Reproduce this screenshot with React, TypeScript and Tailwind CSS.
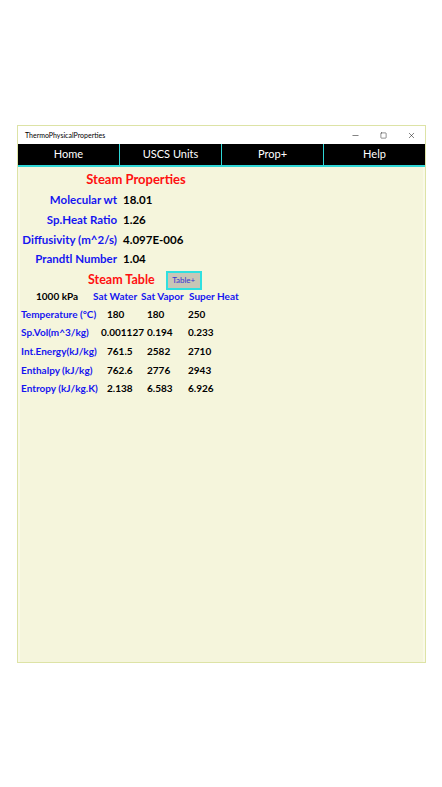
import { Minus, Square, X } from "lucide-react";

const props = [
  { label: "Molecular wt", value: "18.01" },
  { label: "Sp.Heat Ratio", value: "1.26" },
  { label: "Diffusivity (m^2/s)", value: "4.097E-006" },
  { label: "Prandtl Number", value: "1.04" },
];

const rows = [
  { label: "Temperature (°C)", a: "180", b: "180", c: "250" },
  { label: "Sp.Vol(m^3/kg)", a: "0.001127", b: "0.194", c: "0.233", wide: true },
  { label: "Int.Energy(kJ/kg)", a: "761.5", b: "2582", c: "2710" },
  { label: "Enthalpy (kJ/kg)", a: "762.6", b: "2776", c: "2943" },
  { label: "Entropy (kJ/kg.K)", a: "2.138", b: "6.583", c: "6.926" },
];

export default function App() {
  return (
    <div className="min-h-screen bg-white pt-[125px] font-['Lato',sans-serif]">
      <div className="mx-[17px] flex h-[538px] w-[409px] flex-col border border-[#dde3a6] bg-[#f5f5dc]">
        {/* title bar */}
        <div className="flex h-[18px] items-center bg-white pl-[7px] text-[7px] text-black">
          <span className="flex-1">ThermoPhysicalProperties</span>
          <div className="flex items-center">
            <span className="flex w-[28px] justify-center">
              <Minus className="h-[9px] w-[9px]" strokeWidth={1.3} />
            </span>
            <span className="flex w-[28px] justify-center">
              <Square className="h-[7px] w-[7px]" strokeWidth={1.5} />
            </span>
            <span className="flex w-[28px] justify-center">
              <X className="h-[9px] w-[9px]" strokeWidth={1.3} />
            </span>
          </div>
        </div>

        {/* nav */}
        <div className="flex h-[23px] border-b-2 border-[#2fd6d6] bg-black text-[11px] text-white">
          {["Home", "USCS Units", "Prop+", "Help"].map((t, i) => (
            <div
              key={t}
              className={`flex flex-1 items-center justify-center ${i > 0 ? "border-l border-[#2fd6d6]" : ""}`}
            >
              {t}
            </div>
          ))}
        </div>

        {/* content */}
        <div className="flex flex-1 flex-col whitespace-nowrap border-l-2 border-r-2 border-[#f9f9e8] font-bold">
          <div className="mt-[3px] w-[232px] text-center text-[13px] text-[#ff1010]">Steam Properties</div>

          <div className="mt-[2px] flex flex-col gap-[2.7px]">
            {props.map((p) => (
              <div key={p.label} className="flex h-[17px] items-center text-[11.5px]">
                <span className="w-[97px] text-right text-[#1515f0]">{p.label}</span>
                <span className="ml-[6px] text-black">{p.value}</span>
              </div>
            ))}
          </div>

          <div className="mt-[3px] flex items-center">
            <span className="ml-[68px] text-[12.5px] text-[#ff1010]">Steam Table</span>
            <span className="ml-[11px] flex h-[19px] w-[36px] items-center justify-center border-2 border-[#2fe0e0] bg-[#c8c6b6] text-[8px] font-normal text-[#3535d0]">
              Table+
            </span>
          </div>

          <div className="flex h-[14px] items-center text-[10px]">
            <span className="ml-[16px] w-[57px] text-black">1000 kPa</span>
            <span className="w-[48px] text-[#1515f0]">Sat Water</span>
            <span className="w-[48px] text-[#1515f0]">Sat Vapor</span>
            <span className="text-[#1515f0]">Super Heat</span>
          </div>

          <div className="mt-[2.5px] flex flex-col gap-[2.1px]">
            {rows.map((r) => (
              <div key={r.label} className="flex h-[16.5px] items-center text-[10px]">
                <span className="ml-[1px] w-[86px] text-[#1515f0]">{r.label}</span>
                <span className={`text-black ${r.wide ? "-ml-[6px] w-[46px]" : "w-[40px]"}`}>{r.a}</span>
                <span className="w-[41px] text-black">{r.b}</span>
                <span className="text-black">{r.c}</span>
              </div>
            ))}
          </div>
        </div>
      </div>
    </div>
  );
}
